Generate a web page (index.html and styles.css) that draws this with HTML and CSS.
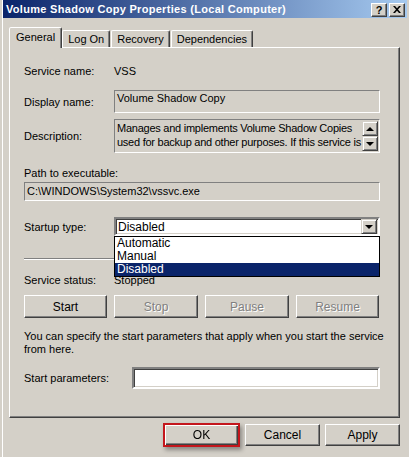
FILE: index.html
```html
<!DOCTYPE html>
<html lang="en">
<head>
    <meta charset="UTF-8">
    <title>Volume Shadow Copy Properties (Local Computer)</title>
    <link rel="stylesheet" href="styles.css">
</head>
<body>
    <div class="window">
        <div class="titlebar">
            <span class="title">Volume Shadow Copy Properties (Local Computer)</span>
            <div class="caption-btns">
                <span class="cap-btn help">?</span>
                <span class="cap-btn">
                    <svg width="8" height="7" viewBox="0 0 8 7"><path d="M0 0h2l2 2.3L6 0h2L5 3.5 8 7H6L4 4.7 2 7H0l3-3.5z" fill="#000"/></svg>
                </span>
            </div>
        </div>

        <div class="tabs">
            <div class="tab active">General</div>
            <div class="tab">Log On</div>
            <div class="tab">Recovery</div>
            <div class="tab">Dependencies</div>
        </div>

        <div class="panel">
            <div class="row row-name">
                <span class="label">Service name:</span>
                <span>VSS</span>
            </div>

            <div class="row row-display">
                <span class="label">Display name:</span>
                <div class="readonly box-display">Volume Shadow Copy</div>
            </div>

            <div class="row row-desc">
                <span class="label">Description:</span>
                <div class="readonly box-desc">
                    <div class="desc-text">
                        <div>Manages and implements Volume Shadow Copies</div>
                        <div>used for backup and other purposes. If this service is</div>
                    </div>
                    <div class="scroll">
                        <span class="arrow-btn"><i class="tri up"></i></span>
                        <span class="arrow-btn"><i class="tri down"></i></span>
                    </div>
                </div>
            </div>

            <div class="path-label">Path to executable:</div>
            <div class="readonly box-path">C:\WINDOWS\System32\vssvc.exe</div>

            <div class="row row-startup">
                <span class="label">Startup type:</span>
                <div class="combo">
                    <span class="combo-value">Disabled</span>
                    <span class="arrow-btn combo-arrow"><i class="tri down"></i></span>
                    <ul class="dropdown">
                        <li>Automatic</li>
                        <li>Manual</li>
                        <li class="selected">Disabled</li>
                    </ul>
                </div>
            </div>

            <div class="separator"></div>

            <div class="row row-status">
                <span class="label">Service status:</span>
                <span>Stopped</span>
            </div>

            <div class="service-btns">
                <button class="btn">Start</button>
                <button class="btn disabled wide">Stop</button>
                <button class="btn disabled wide">Pause</button>
                <button class="btn disabled">Resume</button>
            </div>

            <p class="hint">You can specify the start parameters that apply when you start the service from here.</p>

            <div class="row row-params">
                <span class="label label-wide">Start parameters:</span>
                <div class="input"></div>
            </div>
        </div>

        <div class="footer">
            <button class="btn footer-btn default">OK</button>
            <button class="btn footer-btn">Cancel</button>
            <button class="btn footer-btn">Apply</button>
        </div>
    </div>
</body>
</html>
```

FILE: styles.css
```css
:root {
    --face: #d4d0c8;
    --shadow: #808080;
    --dark: #404040;
    --light: #ffffff;
    --select: #0a246a;
}

body {
    margin: 0;
    font-family: 'Liberation Sans', Arial, sans-serif;
    font-size: 11px;
    color: #000;
    background: var(--face);
}

.window {
    width: 409px;
    height: 457px;
    box-sizing: border-box;
    padding: 0 2px 0 3px;
    background: var(--face);
    box-shadow: inset 2px 0 0 var(--face), inset 3px 0 0 var(--light);
    overflow: hidden;
}

/* title bar */
.titlebar {
    height: 18px;
    display: flex;
    align-items: center;
    justify-content: space-between;
    background: linear-gradient(to right, #0a246a, #a6caf0);
    padding: 0 2px 0 3px;
}

.title {
    color: #fff;
    font-weight: bold;
    font-size: 11px;
    letter-spacing: 0.3px;
}

.caption-btns {
    display: flex;
    gap: 2px;
    margin-top: 1px;
}

.cap-btn {
    width: 12px;
    height: 10px;
    display: flex;
    align-items: center;
    justify-content: center;
    background: var(--face);
    border: 1px solid;
    border-color: var(--light) var(--dark) var(--dark) var(--light);
    box-shadow: inset -1px -1px 0 var(--shadow);
    padding: 1px;
}

.help {
    font-weight: bold;
    font-size: 11px;
    line-height: 10px;
}

/* tabs */
.tabs {
    display: flex;
    align-items: flex-end;
    height: 29px;
    padding-left: 6px;
}

.tab {
    height: 16px;
    line-height: 16px;
    padding: 0 5px;
    border: 1px solid;
    border-bottom: none;
    border-color: var(--light) var(--dark) transparent var(--light);
    box-shadow: inset -1px 0 0 var(--shadow);
    border-radius: 2px 2px 0 0;
    margin-left: 1px;
}

.tab.active {
    height: 20px;
    line-height: 18px;
    padding: 0 6px;
    margin-right: -2px;
    margin-bottom: -1px;
    margin-left: 0;
    position: relative;
    background: var(--face);
    z-index: 2;
}

.tab.active + .tab {
    margin-left: 2px;
}

/* panel */
.panel {
    position: relative;
    margin-right: 7px;
    margin-left: 6px;
    height: 371px;
    box-sizing: border-box;
    border: 1px solid;
    border-color: var(--light) var(--dark) var(--dark) var(--light);
    box-shadow: inset -1px -1px 0 var(--shadow);
    padding: 16px 0 0 14px;
}

.row {
    display: flex;
    align-items: center;
}

.label {
    width: 90px;
    flex: none;
}

.label-wide {
    width: 108px;
}

.row-name {
    height: 13px;
}

.readonly {
    box-sizing: border-box;
    border: 1px solid;
    border-color: var(--shadow) var(--light) var(--light) var(--shadow);
    background: var(--face);
    padding: 1px 2px;
}

.row-display {
    margin-top: 13px;
}

.box-display {
    width: 266px;
    height: 23px;
}

.row-desc {
    margin-top: 6px;
}

.box-desc {
    width: 266px;
    height: 34px;
    display: flex;
    padding: 1px 1px 1px 2px;
    line-height: 14px;
}

.desc-text {
    flex: 1;
    height: 28px;
    overflow: hidden;
    white-space: nowrap;
    letter-spacing: -0.25px;
}

.scroll {
    display: flex;
    flex-direction: column;
    justify-content: space-between;
    width: 16px;
}

.arrow-btn {
    box-sizing: border-box;
    width: 16px;
    height: 15px;
    display: flex;
    align-items: center;
    justify-content: center;
    background: var(--face);
    border: 1px solid;
    border-color: var(--face) var(--dark) var(--dark) var(--face);
    box-shadow: inset 1px 1px 0 var(--light), inset -1px -1px 0 var(--shadow);
}

.tri {
    width: 0;
    height: 0;
    border-left: 4px solid transparent;
    border-right: 4px solid transparent;
}

.tri.up {
    border-bottom: 4px solid #000;
}

.tri.down {
    border-top: 4px solid #000;
}

.path-label {
    margin-top: 14px;
    line-height: 13px;
}

.box-path {
    margin-top: 2px;
    width: 356px;
    height: 19px;
    line-height: 15px;
}

.row-startup {
    margin-top: 16px;
}

.combo {
    position: relative;
    box-sizing: border-box;
    width: 266px;
    height: 19px;
    display: flex;
    align-items: center;
    justify-content: space-between;
    background: #fff;
    border: 2px solid;
    border-color: var(--shadow) var(--light) var(--light) var(--shadow);
    box-shadow: inset 1px 1px 0 var(--dark), inset -1px -1px 0 var(--face);
    padding: 0 1px 0 2px;
    font-size: 12px;
}

.combo-arrow {
    height: 15px;
}

.dropdown {
    position: absolute;
    top: 17px;
    left: -2px;
    right: -2px;
    margin: 0;
    padding: 0;
    list-style: none;
    background: #fff;
    border: 1px solid #000;
    font-size: 12px;
    z-index: 5;
}

.dropdown li {
    height: 13px;
    line-height: 13px;
    padding-left: 2px;
}

.dropdown li.selected {
    background: var(--select);
    color: #fff;
}

.separator {
    margin-top: 22px;
    width: 356px;
    height: 1px;
    background: var(--shadow);
    border-bottom: 1px solid var(--light);
}

.row-status {
    margin-top: 13px;
    height: 13px;
}

.service-btns {
    display: flex;
    gap: 7px;
    margin-top: 9px;
    width: 356px;
}

.btn {
    box-sizing: border-box;
    font-family: inherit;
    font-size: 12px;
    background: var(--face);
    border: 1px solid;
    border-color: var(--light) var(--dark) var(--dark) var(--light);
    box-shadow: inset -1px -1px 0 var(--shadow);
    padding: 0;
    color: #000;
    width: 83px;
    height: 23px;
}

.btn.wide {
    width: 84px;
}

.btn.disabled {
    color: var(--shadow);
    text-shadow: 1px 1px 0 var(--light);
}

.hint {
    margin: 12px 0 0;
    line-height: 13px;
    width: 366px;
    font-size: 11px;
}

.row-params {
    margin-top: 11px;
}

.input {
    box-sizing: border-box;
    width: 248px;
    height: 22px;
    background: #fff;
    border: 2px solid;
    border-color: var(--shadow) var(--light) var(--light) var(--shadow);
    box-shadow: inset 1px 1px 0 var(--dark), inset -1px -1px 0 var(--face);
}

/* bottom buttons */
.footer {
    display: flex;
    justify-content: flex-end;
    gap: 5px;
    margin-top: 6px;
    padding-right: 7px;
}

.footer-btn {
    width: 75px;
    height: 22px;
}

.footer-btn.default {
    border: 1px solid #000;
    box-shadow: inset 1px 1px 0 var(--light), inset -1px -1px 0 var(--dark), inset -2px -2px 0 var(--shadow);
    outline: 2px solid #c4161c;
    outline-offset: -1px;
    filter: drop-shadow(2px 3px 2px rgba(0, 0, 0, 0.35));
    margin-right: 1px;
}
```
